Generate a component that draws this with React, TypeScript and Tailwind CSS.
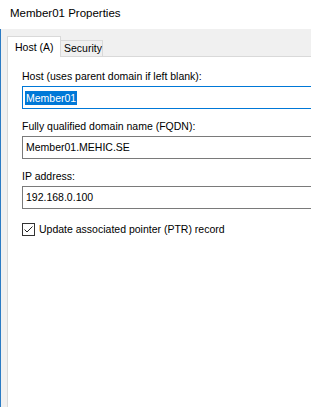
export default function App() {
  return (
    <div className="w-[311px] h-[407px] overflow-hidden bg-white text-black font-['Liberation_Sans',Arial,sans-serif] flex flex-col">
      {/* title bar */}
      <div className="h-[29px] shrink-0 pl-[10px] pt-[6px] text-[11.5px] leading-[15px]">
        Member01 Properties
      </div>

      {/* dialog body */}
      <div className="flex-1 flex flex-col border-l border-[#2b7bc4] bg-[#f0f0f0] pl-[6px]">
        <div className="h-[27px] shrink-0 flex items-end text-[10.5px]">
          <div className="relative z-10 -mb-px h-[21px] w-[54px] bg-white border-t border-l border-r border-[#d9d9d9] pl-[7px] pt-[4px] leading-[13px]">
            Host (A)
          </div>
          <div className="h-[16px] w-[42px] border-t border-r border-[#d9d9d9] pl-[3px] pt-px leading-[13px]">
            Security
          </div>
        </div>

        <div className="flex-1 bg-white border-t border-l border-[#d9d9d9] pl-[14px] pt-[13px] text-[10.5px] leading-[13px]">
          <div>Host (uses parent domain if left blank):</div>
          <div className="mt-[3px] h-[23px] w-[300px] border border-[#0078d7] flex items-center pl-[2px]">
            <span className="bg-[#0078d7] text-white px-px leading-[14px]">Member01</span>
          </div>

          <div className="mt-[11px]">Fully qualified domain name (FQDN):</div>
          <div className="mt-[3px] h-[23px] w-[300px] border border-[#7a7a7a] flex items-center pl-[3px]">
            Member01.MEHIC.SE
          </div>

          <div className="mt-[11px]">IP address:</div>
          <div className="mt-[3px] h-[23px] w-[300px] border border-[#7a7a7a] flex items-center pl-[3px]">
            192.168.0.100
          </div>

          <div className="mt-[14px] flex items-center gap-[4px]">
            <div className="h-[13px] w-[13px] border border-[#333333] bg-white flex items-center justify-center">
              <svg width="11" height="11" viewBox="0 0 11 11" fill="none">
                <polyline points="1.5,5.5 4,8 9.5,2.5" stroke="#222" strokeWidth="1" />
              </svg>
            </div>
            <span>Update associated pointer (PTR) record</span>
          </div>
        </div>
      </div>
    </div>
  );
}
